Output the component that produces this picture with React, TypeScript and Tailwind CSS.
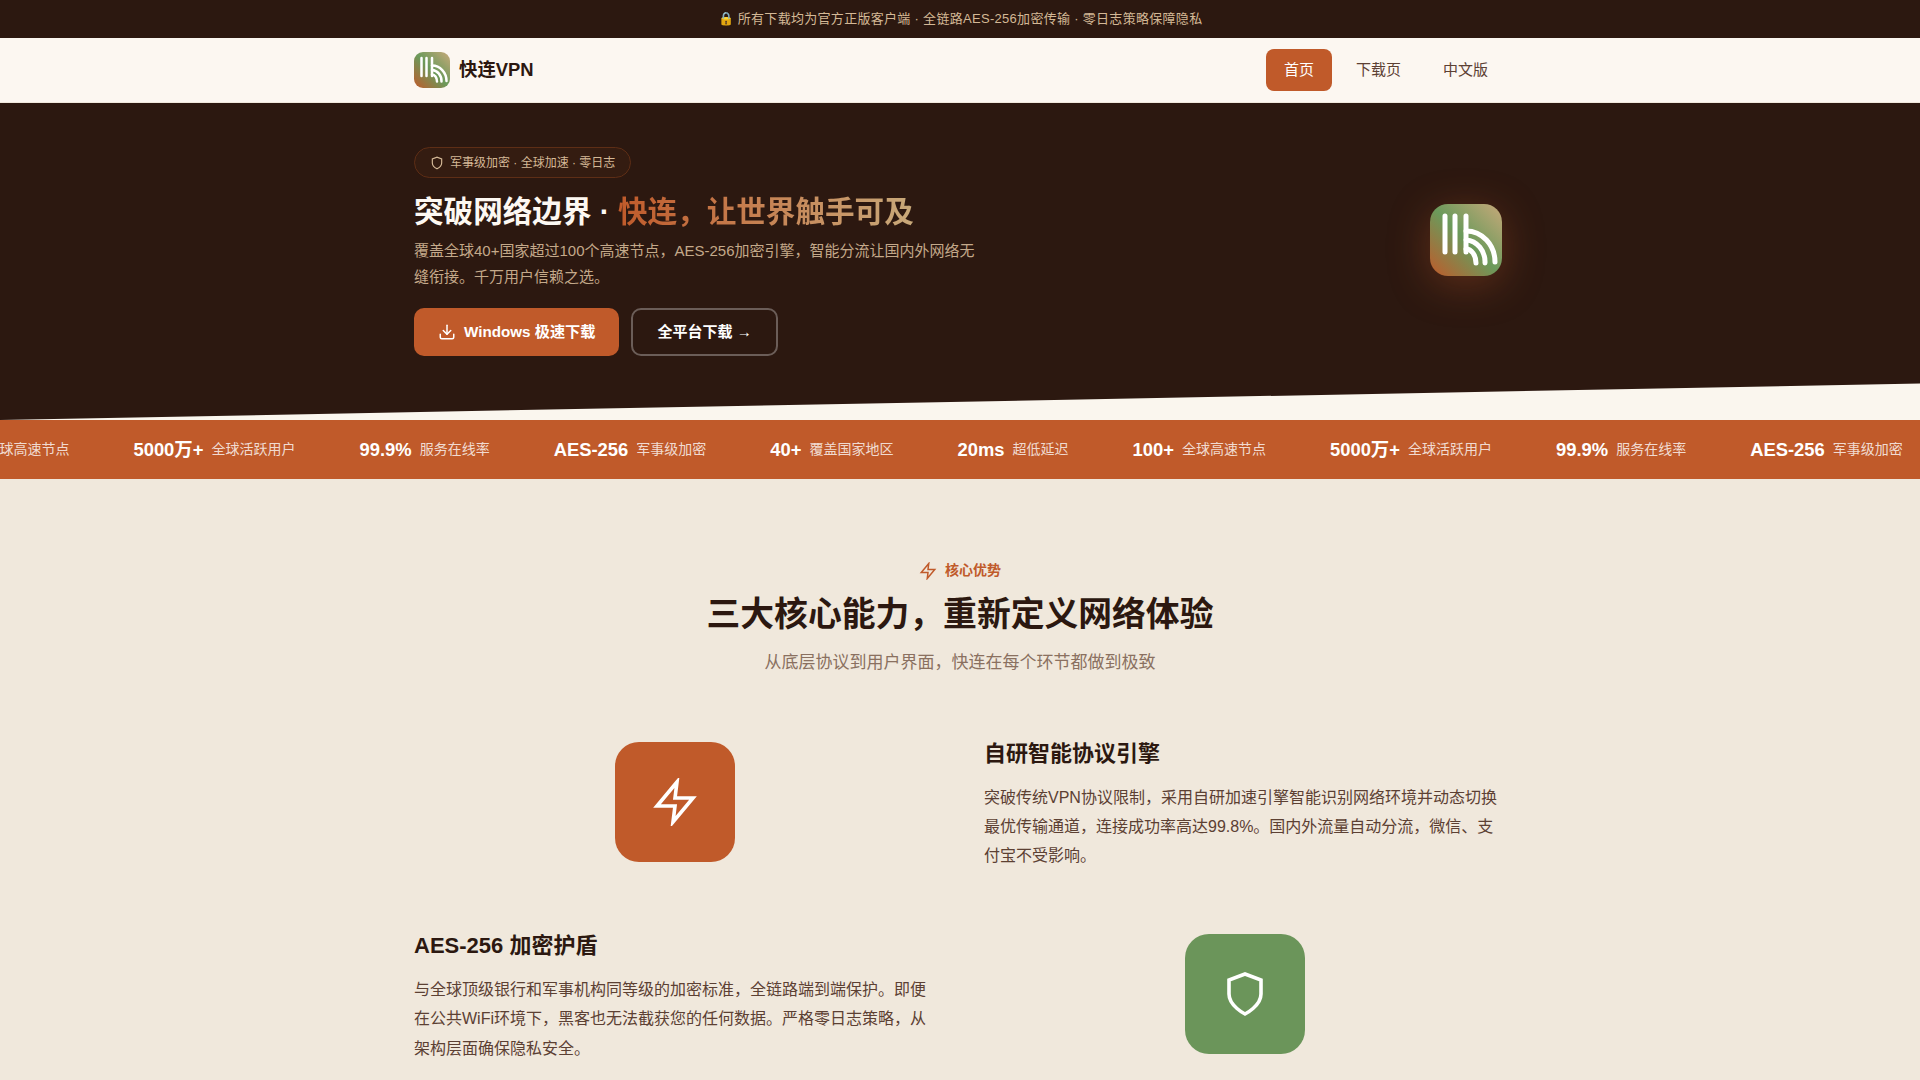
const FONT = "font-['Liberation_Sans','Noto_Sans_CJK_SC',sans-serif]";

const stats = [
  { value: "100+", label: "全球高速节点" },
  { value: "5000万+", label: "全球活跃用户" },
  { value: "99.9%", label: "服务在线率" },
  { value: "AES-256", label: "军事级加密" },
  { value: "40+", label: "覆盖国家地区" },
  { value: "20ms", label: "超低延迟" },
];

function Logo({ className, gid }: { className: string; gid: string }) {
  return (
    <svg viewBox="0 0 72 72" className={className}>
      <defs>
        <linearGradient id={gid} x1="0" y1="1" x2="1" y2="0">
          <stop offset="0" stopColor="#c05a2a" />
          <stop offset="0.5" stopColor="#6b9a5b" />
          <stop offset="1" stopColor="#c8a97a" />
        </linearGradient>
      </defs>
      <rect width="72" height="72" rx="18" fill={`url(#${gid})`} />
      <g stroke="#fff" strokeWidth="5" strokeLinecap="round" fill="none">
        <path d="M15 12V48M25 12V48M36 12V48" />
        <path d="M36 27A29 31 0 0 1 65 58" />
        <path d="M36 36A20 22 0 0 1 55 59" />
        <path d="M36 45A10 14 0 0 1 46 59" />
      </g>
    </svg>
  );
}

function ZapIcon({ className, width = 1.8 }: { className: string; width?: number }) {
  return (
    <svg viewBox="0 0 24 24" fill="none" stroke="currentColor" strokeWidth={width} className={className}>
      <polygon points="13 2 3 14 12 14 11 22 21 10 12 10 13 2" />
    </svg>
  );
}

function ShieldIcon({ className, width = 1.8 }: { className: string; width?: number }) {
  return (
    <svg viewBox="0 0 24 24" fill="none" stroke="currentColor" strokeWidth={width} className={className}>
      <path d="M12 22s8-4 8-10V5l-8-3-8 3v7c0 6 8 10 8 10z" />
    </svg>
  );
}

export default function App() {
  return (
    <div className={`${FONT} h-screen overflow-hidden bg-[#f0e8dc] text-[#2c1810]`}>
      {/* Top notice */}
      <div className="flex h-[38px] items-center justify-center bg-[#2c1810] text-[13px] tracking-[0.3px] text-[#d4b896]">
        🔒 所有下载均为官方正版客户端 · 全链路AES-256加密传输 · 零日志策略保障隐私
      </div>

      {/* Nav */}
      <nav className="h-[65px] border-b border-[#f0e8dc] bg-[#fcf7f1]">
        <div className="mx-auto flex h-full w-[1092px] items-center justify-between">
          <div className="flex items-center gap-[9px]">
            <Logo gid="logo-small" className="h-9 w-9" />
            <span className="text-[18.4px] font-bold">快连VPN</span>
          </div>
          <div className="flex items-center gap-[6px] text-[15px] text-[#5c4033]">
            <a className="rounded-[8px] bg-[#c05a2a] px-[18px] py-[10px] text-white">首页</a>
            <a className="px-[18px] py-[10px]">下载页</a>
            <a className="px-[18px] py-[10px]">中文版</a>
          </div>
        </div>
      </nav>

      {/* Hero */}
      <div className="bg-[#faf6ee]">
        <div className="h-[317px] bg-[#2c1810] pt-[44px] [clip-path:polygon(0_0,100%_0,100%_88.5%,0_100%)]">
          <div className="mx-auto flex w-[1092px] items-start justify-between">
            <div className="w-[570px]">
              <div className="inline-flex h-[31px] items-center gap-[6px] rounded-full border border-[#5e2e16] bg-[#46251350] px-[15px] text-[12px] text-[#d4b896]">
                <ShieldIcon width={2} className="h-[14px] w-[14px]" />
                军事级加密 · 全球加速 · 零日志
              </div>
              <h1 className="mt-[13px] text-[29.6px] leading-[42px] font-bold text-[#fdf8f2]">
                突破网络边界 ·{" "}
                <span className="bg-gradient-to-r from-[#c05a2a] to-[#c8a97a] bg-clip-text text-transparent">
                  快连&#xFF0C;让世界触手可及
                </span>
              </h1>
              <p className="mt-[5px] text-[15px] leading-[25.5px] text-[#c4a98a]">
                覆盖全球40+国家超过100个高速节点&#xFF0C;AES-256加密引擎&#xFF0C;智能分流让国内外网络无缝衔接。千万用户信赖之选。
              </p>
              <div className="mt-[19px] flex gap-3">
                <button className="flex h-12 items-center gap-2 rounded-[10px] bg-[#c05a2a] px-6 text-[15.2px] font-bold text-white">
                  <svg viewBox="0 0 24 24" fill="none" stroke="currentColor" strokeWidth="2" strokeLinecap="round" strokeLinejoin="round" className="h-[18px] w-[18px]">
                    <path d="M21 15v4a2 2 0 0 1-2 2H5a2 2 0 0 1-2-2v-4" />
                    <polyline points="7 10 12 15 17 10" />
                    <line x1="12" y1="15" x2="12" y2="3" />
                  </svg>
                  Windows 极速下载
                </button>
                <button className="h-12 rounded-[10px] border-2 border-[#ffffff4d] px-6 text-[15px] font-bold text-white">
                  全平台下载 →
                </button>
              </div>
            </div>
            <div className="mt-[57px] mr-1 rounded-[18px] shadow-[0_8px_40px_rgba(192,90,42,0.35)]">
              <Logo gid="logo-large" className="block h-[72px] w-[72px]" />
            </div>
          </div>
        </div>
      </div>

      {/* Stats marquee */}
      <div className="flex h-[59px] items-center overflow-hidden whitespace-nowrap bg-[#c05a2a] text-white">
        <div className="ml-[-64px] flex items-center gap-16">
          {[...stats, ...stats, ...stats].map((s, i) => (
            <div key={i} className="flex shrink-0 items-center gap-2">
              <span className="text-[18.4px] font-bold">{s.value}</span>
              <span className="text-[14px] text-[#ffffffcc]">{s.label}</span>
            </div>
          ))}
        </div>
      </div>

      {/* Features */}
      <section className="mx-auto w-[1092px] pt-[81px]">
        <div className="text-center">
          <div className="flex items-center justify-center gap-2 text-[14px] font-bold text-[#c05a2a]">
            <ZapIcon width={2} className="h-[18px] w-[18px]" />
            核心优势
          </div>
          <h2 className="mt-[10px] text-[33.8px] leading-[46px] font-bold">三大核心能力&#xFF0C;重新定义网络体验</h2>
          <p className="mt-[13px] text-[17px] text-[#8a7060]">从底层协议到用户界面&#xFF0C;快连在每个环节都做到极致</p>
        </div>

        <div className="mt-[63px] grid grid-cols-2 items-center gap-x-12 gap-y-[60px]">
          <div className="mb-[6px] flex justify-center">
            <div className="flex h-[120px] w-[120px] items-center justify-center rounded-[24px] bg-[#c05a2a] text-white">
              <ZapIcon className="h-12 w-12" />
            </div>
          </div>
          <div>
            <h3 className="text-[22px] leading-[30px] font-bold">自研智能协议引擎</h3>
            <p className="mt-[14px] text-[16px] leading-[29.4px] text-[#5c4033]">
              突破传统VPN协议限制&#xFF0C;采用自研加速引擎智能识别网络环境并动态切换最优传输通道&#xFF0C;连接成功率高达99.8%。国内外流量自动分流&#xFF0C;微信、支付宝不受影响。
            </p>
          </div>
          <div>
            <h3 className="text-[22px] leading-[30px] font-bold">AES-256 加密护盾</h3>
            <p className="mt-[14px] text-[16px] leading-[29.4px] text-[#5c4033]">
              与全球顶级银行和军事机构同等级的加密标准&#xFF0C;全链路端到端保护。即便在公共WiFi环境下&#xFF0C;黑客也无法截获您的任何数据。严格零日志策略&#xFF0C;从架构层面确保隐私安全。
            </p>
          </div>
          <div className="mb-[6px] flex justify-center">
            <div className="flex h-[120px] w-[120px] items-center justify-center rounded-[24px] bg-[#6b955a] text-white">
              <ShieldIcon className="h-12 w-12" />
            </div>
          </div>
        </div>
      </section>
    </div>
  );
}
